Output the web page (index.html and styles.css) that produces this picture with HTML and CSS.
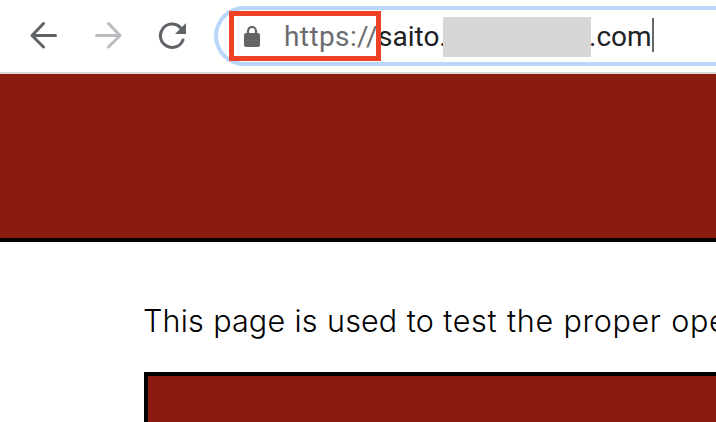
FILE: index.html
```html
<!DOCTYPE html>
<html lang="en">
<head>
<meta charset="utf-8">
<title>Test page</title>
<link rel="stylesheet" href="styles.css">
</head>
<body>
<div class="toolbar">
  <svg class="icon back" viewBox="0 0 28 28"><path d="M25.5 14.5H3M13.5 2.5 2 14.5 13.5 26"/></svg>
  <svg class="icon forward" viewBox="0 0 28 28"><path d="M2.5 14.5H25M14.5 2.5 26 14.5 14.5 26"/></svg>
  <svg class="icon reload" viewBox="0 0 28 28"><path d="M25 19A11.7 11.7 0 1 1 22.5 6.6"/><path class="solid" d="M28 2V13H17Z"/></svg>
  <div class="address">
    <svg class="lock" viewBox="0 0 16 21"><path class="shackle" d="M4 8V5a4 4 0 0 1 8 0v3"/><rect y="7" width="16" height="14" rx="2"/></svg>
    <span class="scheme">https://</span><span class="host">saito.</span><span class="redacted"></span><span class="domain">.com</span><span class="caret"></span>
    <div class="highlight"></div>
  </div>
</div>
<header class="banner"></header>
<main class="content">
  <p class="message">This page is used to <span class="wide">test the proper ope</span></p>
  <section class="panel"></section>
</main>
</body>
</html>
```
FILE: styles.css
```css
* { box-sizing: border-box; }
body { margin: 0; height: 422px; overflow: hidden; background: #fff; color: #000; }
.toolbar { display: flex; height: 74px; padding: 6px 0 0 30px; border-bottom: 2px solid #d9d9da; }
.icon { flex: none; width: 28px; height: 28px; margin: 15px 36px 0 0; fill: none; stroke: #5f6368; stroke-width: 3; stroke-linecap: round; stroke-linejoin: round; }
.forward { stroke: #b9bbbe; }
.reload { margin-right: 28px; }
.icon .solid { fill: #5f6368; stroke: none; }
.address { position: relative; flex: 1; display: flex; height: 60px; border: 4px solid #b9d6fb; border-right: 0; border-radius: 30px 0 0 30px; padding-left: 26px; font: 28px/54px Roboto, sans-serif; color: #202124; white-space: nowrap; }
.lock { flex: none; width: 16px; height: 21px; margin: 16px 24px 0 0; fill: #636566; }
.lock .shackle { fill: none; stroke: #636566; stroke-width: 2.2; }
.scheme { flex: none; width: 94px; color: #6b6c6f; letter-spacing: .4px; }
.host { flex: none; width: 65px; }
.redacted { position: relative; flex: none; width: 148px; height: 40px; margin-top: 7px; background: #d6d6d6; }
.domain { flex: none; width: 62px; margin-left: -2px; }
.caret { flex: none; width: 2px; height: 34px; margin: 8px 0 0 1px; background: #66686a; }
.highlight { position: absolute; left: 11px; top: 1px; width: 152px; height: 50px; border: 5px solid #ee4126; }
.banner { height: 168px; background: #8c1a11; border-bottom: 4px solid #000; }
.content { padding-left: 144px; }
.message { margin: 0; padding-top: 55px; height: 130px; overflow: hidden; font: 350 30.5px/48px Inter, sans-serif; letter-spacing: .15px; word-spacing: .6px; text-indent: -1px; white-space: nowrap; }
.wide { letter-spacing: .65px; }
.panel { height: 60px; background: #8c1a11; border: solid #000; border-width: 4px 0 0 4px; }
```
